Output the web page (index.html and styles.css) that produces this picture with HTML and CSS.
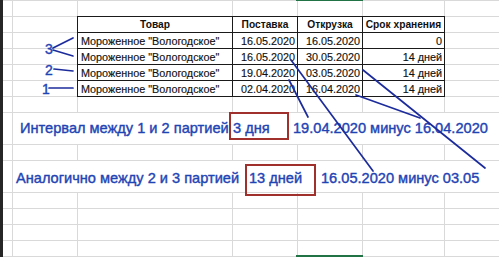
FILE: index.html
```html
<!DOCTYPE html>
<html lang="ru">
<head>
<meta charset="utf-8">
<title>Сроки хранения</title>
<link rel="stylesheet" href="styles.css">
</head>
<body>
<div class="page">
  <div class="sheet">
    <div></div><div></div><div></div><div></div><div></div><div></div><div></div>

    <div></div><div></div>
    <div class="t th">Товар</div><div class="t th">Поставка</div><div class="t th">Открузка</div><div class="t th">Срок хранения</div>
    <div></div>

    <div></div><div></div>
    <div class="t">Мороженное "Вологодское"</div><div class="t num">16.05.2020</div><div class="t num">16.05.2020</div><div class="t num">0</div>
    <div></div>

    <div></div><div></div>
    <div class="t">Мороженное "Вологодское"</div><div class="t num">16.05.2020</div><div class="t num">30.05.2020</div><div class="t num">14 дней</div>
    <div></div>

    <div></div><div></div>
    <div class="t">Мороженное "Вологодское"</div><div class="t num">19.04.2020</div><div class="t num">03.05.2020</div><div class="t num">14 дней</div>
    <div></div>

    <div></div><div></div>
    <div class="t">Мороженное "Вологодское"</div><div class="t num">02.04.2020</div><div class="t num">16.04.2020</div><div class="t num">14 дней</div>
    <div></div>

    <div></div><div></div><div></div><div></div><div></div><div></div><div></div>

    <div></div>
    <div class="note note-1">
      <span class="seg seg-a">Интервал между 1 и 2 партией</span><span class="seg seg-b">3 дня</span><span class="seg">19.04.2020 минус 16.04.2020</span>
    </div>

    <div></div><div></div><div></div><div></div><div></div><div></div><div></div>

    <div></div>
    <div class="note note-2">
      <span class="seg seg-c">Аналогично между 2 и 3 партией</span><span class="seg seg-d">13 дней</span><span class="seg">16.05.2020 минус 03.05</span>
    </div>

    <div></div><div></div><div></div><div></div><div></div><div></div><div></div>
    <div></div><div></div><div></div><div></div><div></div><div></div><div></div>
    <div></div><div></div><div></div><div></div><div></div><div></div><div></div>
    <div></div><div></div><div></div><div></div><div></div><div></div><div></div>
  </div>

  <div class="sel sel-top"></div>
  <div class="sel sel-bottom"></div>
  <div class="box box-1"></div>
  <div class="box box-2"></div>

  <svg class="ink" width="499" height="257" viewBox="0 0 499 257">
    <g class="strokes">
      <line x1="53" y1="48" x2="73" y2="38"/>
      <line x1="53" y1="50" x2="73" y2="56"/>
      <line x1="54" y1="69" x2="73" y2="71"/>
      <line x1="49" y1="88" x2="73" y2="88"/>
      <line x1="291" y1="60" x2="373" y2="171"/>
      <line x1="289" y1="80" x2="308" y2="117"/>
      <line x1="363" y1="70" x2="485" y2="168"/>
      <line x1="356" y1="95" x2="420" y2="118"/>
    </g>
    <g class="marks">
      <text x="45" y="54">3</text>
      <text x="45" y="75">2</text>
      <text x="42" y="94">1</text>
    </g>
  </svg>
</div>
</body>
</html>
```

FILE: styles.css
```css
body {
  margin: 0;
  background: #ffffff;
}

.page {
  position: relative;
  width: 499px;
  height: 257px;
  overflow: hidden;
  background: #ffffff;
}

.sheet {
  box-sizing: border-box;
  width: 499px;
  height: 257px;
  border-left: 3px solid #262626;
  display: grid;
  grid-template-columns: 9px 64px 154px 64px 64px 81px 54px;
  grid-template-rows: repeat(7, 15px) 31px 15px 31px repeat(4, 15px);
  gap: 1px;
  padding-top: 1px;
  background: #d9d9d9;
  font-family: "Liberation Sans", Arial, sans-serif;
}

.sheet > div {
  background: #ffffff;
  min-width: 0;
}

.t {
  outline: 1px solid #1a1a1a;
  font-size: 10.8px;
  line-height: 16px;
  color: #111111;
  white-space: nowrap;
  overflow: hidden;
  padding: 0 2px 0 3px;
  -webkit-text-stroke: 0.15px #111111;
}

.th {
  font-weight: bold;
  text-align: center;
  padding: 0;
  font-size: 10.2px;
  -webkit-text-stroke: 0;
}

.num {
  text-align: right;
}

.note {
  grid-column: span 6;
  display: flex;
  align-items: center;
  font-size: 14.6px;
  color: #1f44b4;
  white-space: nowrap;
  overflow: hidden;
  -webkit-text-stroke: 0.4px #1f44b4;
}

.note-1 {
  padding: 0 0 2px 7px;
}

.note-2 {
  padding: 2px 0 0 3px;
}

.seg {
  flex: none;
}

.seg-a { width: 213px; }
.seg-b { width: 60px; }
.seg-c { width: 233px; }
.seg-d { width: 72px; }

.sel {
  position: absolute;
  background: #217346;
  left: 296px;
  width: 67px;
}

.sel-top {
  top: 0;
  height: 1px;
}

.sel-bottom {
  top: 255px;
  height: 2px;
}

.box {
  position: absolute;
  box-sizing: border-box;
  border: 2px solid #a0302b;
}

.box-1 {
  left: 229px;
  top: 112px;
  width: 60px;
  height: 28px;
}

.box-2 {
  left: 245px;
  top: 164px;
  width: 71px;
  height: 32px;
}

.ink {
  position: absolute;
  left: 0;
  top: 0;
}

.strokes line {
  stroke: #1d2c9c;
  stroke-width: 1.7;
  stroke-linecap: round;
}

.marks text {
  font-family: "Liberation Sans", Arial, sans-serif;
  font-size: 14px;
  fill: #1f44b4;
  stroke: #1f44b4;
  stroke-width: 0.4;
}
```
